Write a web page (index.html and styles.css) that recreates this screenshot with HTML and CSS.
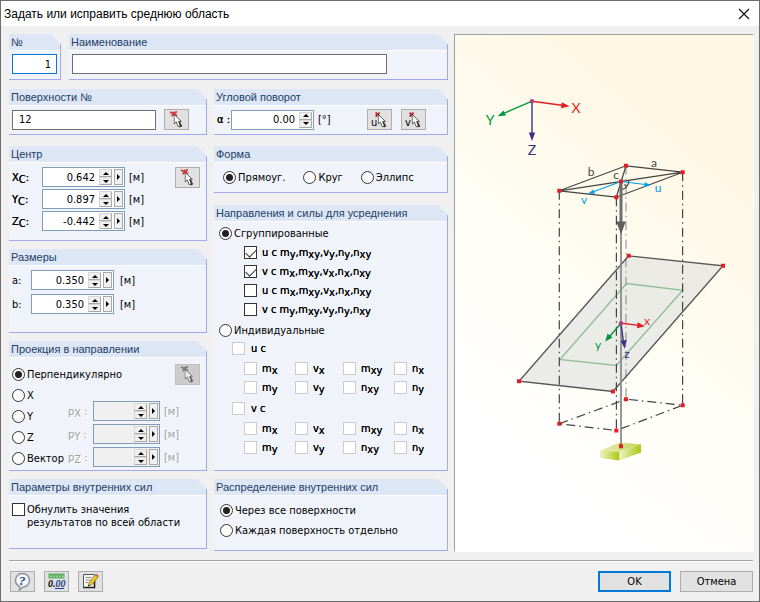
FILE: index.html
```html
<!DOCTYPE html>
<html lang="ru">
<head>
<meta charset="utf-8">
<title>Задать или исправить среднюю область</title>
<link rel="stylesheet" href="styles.css">
</head>
<body>
<svg class="defs" aria-hidden="true">
  <symbol id="pointer" viewBox="0 0 9 14">
    <path d="M.6.8v9.6l2.200-1.900 1.900 4.600 2.200-1-1.900-4.300h2.800z" fill="#fff" stroke="#4a4a4a" stroke-width=".9"/>
    <path d="M5.600 8.200l2.200 4.200-2 1.200" fill="none" stroke="#333" stroke-width="1.500"/>
  </symbol>
  <symbol id="pick" viewBox="0 0 23 19">
    <path class="mark" d="M5 2l7 3.600M11.800 1.300L6.600 6.200M8.600 1.600l1 4.200" stroke="#d03a3a" stroke-width="1.800" fill="none"/>
    <use href="#pointer" x="8.500" y="3.500" width="9" height="14"/>
  </symbol>
  <symbol id="mark-pick" viewBox="0 0 23 19">
    <path d="M7.600 2.600l4 4M11.600 2.600l-4 4" stroke="#b82030" stroke-width="1.800" fill="none"/>
    <use href="#pointer" x="9.600" y="3.600" width="9" height="14"/>
  </symbol>
</svg>
<form class="dialog">
  <header class="titlebar">
    <h1>Задать или исправить среднюю область</h1>
    <button type="button" class="close" aria-label="Закрыть"><svg viewBox="0 0 12 12"><path d="M1 1l10 10M11 1L1 11" stroke="#111" stroke-width="1.2"/></svg></button>
  </header>

  <main class="content">
    <div class="settings">
      <div class="row row-name">
        <section class="panel">
          <h2><label for="num">№</label></h2>
          <div class="body line"><input id="num" class="text focus" value="1"></div>
        </section>
        <section class="panel">
          <h2><label for="name">Наименование</label></h2>
          <div class="body line"><input id="name" class="text name"></div>
        </section>
      </div>

      <div class="row row-cols">
        <section class="panel">
          <h2><label for="surf">Поверхности №</label></h2>
          <div class="body line spread"><input id="surf" class="text surf" value="12"><button type="button" class="tool" aria-label="Выбрать поверхности"><svg viewBox="0 0 23 19"><use href="#pick"/></svg></button></div>
        </section>
        <section class="panel">
          <h2>Угловой поворот</h2>
          <div class="body line angle">
            <label for="alpha">α :</label>
            <div class="spin"><input id="alpha" value="0.00"><span class="steps"><button type="button" class="up" aria-label="Больше"></button><button type="button" class="down" aria-label="Меньше"></button></span></div>
            <span class="unit">[°]</span>
            <div class="tools">
              <button type="button" class="tool" aria-label="Ось u"><svg viewBox="0 0 23 19"><text x="3" y="16">u</text><use href="#mark-pick"/></svg></button>
              <button type="button" class="tool" aria-label="Ось v"><svg viewBox="0 0 23 19"><text x="3" y="16">v</text><use href="#mark-pick"/></svg></button>
            </div>
          </div>
        </section>
      </div>

      <div class="row row-cols groups">
        <div class="col">
          <section class="panel">
            <h2>Центр</h2>
            <div class="body center">
              <div class="fields">
                <label for="xc">X<sub>C</sub>:</label><div class="spin"><input id="xc" value="0.642"><span class="steps"><button type="button" class="up" aria-label="Больше"></button><button type="button" class="down" aria-label="Меньше"></button></span><button type="button" class="more" aria-label="Список"></button></div><span class="unit">[м]</span>
                <label for="yc">Y<sub>C</sub>:</label><div class="spin"><input id="yc" value="0.897"><span class="steps"><button type="button" class="up" aria-label="Больше"></button><button type="button" class="down" aria-label="Меньше"></button></span><button type="button" class="more" aria-label="Список"></button></div><span class="unit">[м]</span>
                <label for="zc">Z<sub>C</sub>:</label><div class="spin"><input id="zc" value="-0.442"><span class="steps"><button type="button" class="up" aria-label="Больше"></button><button type="button" class="down" aria-label="Меньше"></button></span><button type="button" class="more" aria-label="Список"></button></div><span class="unit">[м]</span>
              </div>
              <button type="button" class="tool" aria-label="Выбрать центр"><svg viewBox="0 0 23 19"><use href="#pick"/></svg></button>
            </div>
          </section>

          <section class="panel">
            <h2>Размеры</h2>
            <div class="body sizes">
              <div class="fields">
                <label for="sa">a:</label><div class="spin"><input id="sa" value="0.350"><span class="steps"><button type="button" class="up" aria-label="Больше"></button><button type="button" class="down" aria-label="Меньше"></button></span><button type="button" class="more" aria-label="Список"></button></div><span class="unit">[м]</span>
                <label for="sb">b:</label><div class="spin"><input id="sb" value="0.350"><span class="steps"><button type="button" class="up" aria-label="Больше"></button><button type="button" class="down" aria-label="Меньше"></button></span><button type="button" class="more" aria-label="Список"></button></div><span class="unit">[м]</span>
              </div>
            </div>
          </section>

          <section class="panel">
            <h2>Проекция в направлении</h2>
            <div class="body projection">
              <div class="first">
                <label class="opt"><input type="radio" name="proj" checked>Перпендикулярно</label>
                <button type="button" class="tool" disabled aria-label="Выбрать вектор"><svg viewBox="0 0 23 19"><use href="#pick"/></svg></button>
              </div>
              <div class="axes">
                <label class="opt"><input type="radio" name="proj">X</label>
                <label class="opt"><input type="radio" name="proj">Y</label>
                <label class="opt"><input type="radio" name="proj">Z</label>
                <label class="opt"><input type="radio" name="proj">Вектор</label>
              </div>
              <div class="fields off">
                <label for="px">p<sub>X</sub> :</label><div class="spin"><input id="px" disabled><span class="steps"><button type="button" class="up" disabled aria-label="Больше"></button><button type="button" class="down" disabled aria-label="Меньше"></button></span><button type="button" class="more" disabled aria-label="Список"></button></div><span class="unit">[м]</span>
                <label for="py">p<sub>Y</sub> :</label><div class="spin"><input id="py" disabled><span class="steps"><button type="button" class="up" disabled aria-label="Больше"></button><button type="button" class="down" disabled aria-label="Меньше"></button></span><button type="button" class="more" disabled aria-label="Список"></button></div><span class="unit">[м]</span>
                <label for="pz">p<sub>Z</sub> :</label><div class="spin"><input id="pz" disabled><span class="steps"><button type="button" class="up" disabled aria-label="Больше"></button><button type="button" class="down" disabled aria-label="Меньше"></button></span><button type="button" class="more" disabled aria-label="Список"></button></div><span class="unit">[м]</span>
              </div>
            </div>
          </section>

          <section class="panel">
            <h2>Параметры внутренних сил</h2>
            <div class="body params"><label class="opt top"><input type="checkbox"><span>Обнулить значения<br>результатов по всей области</span></label></div>
          </section>
        </div>

        <div class="col">
          <section class="panel shape">
            <h2>Форма</h2>
            <div class="body shapes">
              <label class="opt"><input type="radio" name="shape" checked>Прямоуг.</label>
              <label class="opt"><input type="radio" name="shape">Круг</label>
              <label class="opt"><input type="radio" name="shape">Эллипс</label>
            </div>
          </section>

          <section class="panel">
            <h2>Направления и силы для усреднения</h2>
            <div class="body forces">
              <label class="opt mode"><input type="radio" name="mode" checked>Сгруппированные</label>
              <div class="grouped">
                <label class="opt sym"><input type="checkbox" checked><span>u c m<sub>y</sub>,m<sub>xy</sub>,v<sub>y</sub>,n<sub>y</sub>,n<sub>xy</sub></span></label>
                <label class="opt sym"><input type="checkbox" checked><span>v c m<sub>x</sub>,m<sub>xy</sub>,v<sub>x</sub>,n<sub>x</sub>,n<sub>xy</sub></span></label>
                <label class="opt sym"><input type="checkbox"><span>u c m<sub>x</sub>,m<sub>xy</sub>,v<sub>x</sub>,n<sub>x</sub>,n<sub>xy</sub></span></label>
                <label class="opt sym"><input type="checkbox"><span>v c m<sub>y</sub>,m<sub>xy</sub>,v<sub>y</sub>,n<sub>y</sub>,n<sub>xy</sub></span></label>
              </div>
              <label class="opt mode"><input type="radio" name="mode">Индивидуальные</label>
              <div class="single">
                <label class="opt sym axis"><input type="checkbox" disabled><span>u c</span></label>
                <div class="parts">
                  <label class="opt sym"><input type="checkbox" disabled><span>m<sub>x</sub></span></label>
                  <label class="opt sym"><input type="checkbox" disabled><span>v<sub>x</sub></span></label>
                  <label class="opt sym"><input type="checkbox" disabled><span>m<sub>xy</sub></span></label>
                  <label class="opt sym"><input type="checkbox" disabled><span>n<sub>x</sub></span></label>
                  <label class="opt sym"><input type="checkbox" disabled><span>m<sub>y</sub></span></label>
                  <label class="opt sym"><input type="checkbox" disabled><span>v<sub>y</sub></span></label>
                  <label class="opt sym"><input type="checkbox" disabled><span>n<sub>xy</sub></span></label>
                  <label class="opt sym"><input type="checkbox" disabled><span>n<sub>y</sub></span></label>
                </div>
                <label class="opt sym axis"><input type="checkbox" disabled><span>v c</span></label>
                <div class="parts">
                  <label class="opt sym"><input type="checkbox" disabled><span>m<sub>x</sub></span></label>
                  <label class="opt sym"><input type="checkbox" disabled><span>v<sub>x</sub></span></label>
                  <label class="opt sym"><input type="checkbox" disabled><span>m<sub>xy</sub></span></label>
                  <label class="opt sym"><input type="checkbox" disabled><span>n<sub>x</sub></span></label>
                  <label class="opt sym"><input type="checkbox" disabled><span>m<sub>y</sub></span></label>
                  <label class="opt sym"><input type="checkbox" disabled><span>v<sub>y</sub></span></label>
                  <label class="opt sym"><input type="checkbox" disabled><span>n<sub>xy</sub></span></label>
                  <label class="opt sym"><input type="checkbox" disabled><span>n<sub>y</sub></span></label>
                </div>
              </div>
            </div>
          </section>

          <section class="panel">
            <h2>Распределение внутренних сил</h2>
            <div class="body spreadout">
              <label class="opt"><input type="radio" name="dist" checked>Через все поверхности</label>
              <label class="opt"><input type="radio" name="dist">Каждая поверхность отдельно</label>
            </div>
          </section>
        </div>
      </div>
    </div>

    <figure class="picture">
      <svg viewBox="455 35 298 515" role="img" aria-label="Схема области усреднения">
        <defs>
          <linearGradient id="g1"><stop offset="0" stop-color="#eef3c4"/><stop offset="1" stop-color="#aac814"/></linearGradient>
          <linearGradient id="g2"><stop offset="0" stop-color="#e6edb4"/><stop offset="1" stop-color="#c3d856"/></linearGradient>
        </defs>
        <path d="M628.7 255.3L723 265.3 613 391l-94-10.3z" fill="#dedfde" fill-opacity=".6"/>
        <path d="M626.5 283l56.2 6.7-66.4 75.3-56.3-6z" fill="none" stroke="#93c09b" stroke-width="1.4"/>
        <g fill="none" stroke="#444" stroke-width="1.2" stroke-dasharray="9 4 1.5 4">
          <path d="M559.3 190.3V423.3M616.4 196.7V430M682.6 171.7V404.7"/>
          <path d="M626 165.3V398.7" stroke="#999"/>
          <path d="M559.3 423.3L626 398.7l56.7 6-66.4 25.3z"/>
        </g>
        <path d="M628.7 255.3L723 265.3 613 391l-94-10.3z" fill="none" stroke="#555" stroke-width="1.3"/>
        <path d="M600 450l20-8 21 1.7-21.7 7.8z" fill="url(#g2)"/>
        <path d="M619.3 451.5l21.700-7.800v8.300l-21.700 8z" fill="url(#g1)"/>
        <path d="M600 450l19.300 1.500v8.500l-19.300-2.500z" fill="url(#g1)"/>
        <path d="M626 165.300l56.700 6.400-66.400 25-57-6.400zM559.300 190.300l123.400-18.600M626 165.300l-9.700 31.400" fill="none" stroke="#444" stroke-width="1.2"/>
        <path d="M629 180.500q-1 7-7 8.500" fill="none" stroke="#333" stroke-width="1.2"/><circle cx="625" cy="184.600" r=".8" fill="#333"/>
        <path d="M621 181V446" stroke="#8c8c8c" stroke-width="1.8"/>
        <path d="M621 181v43" stroke="#6e6e6e" stroke-width="3"/>
        <path d="M616.300 221h9.400l-4.700 13z" fill="#5e5e5e"/>
        <g stroke="#00a0e3" fill="#00a0e3" stroke-width="1.2">
          <path d="M621 181l-27 10M621 181l24 3"/><path d="M588.300 193.300l5-4 1.200 3.600zM650 184.700l-5.500 1.300.5-4z" stroke-width=".5"/>
        </g>
        <g stroke-width="1.4">
          <path d="M532 100.700l30 4" stroke="#e31e24"/><path d="M569.500 105.700l-8.500 2 .8-6z" fill="#e31e24"/>
          <path d="M532 100.700l-29 12.500" stroke="#00963f"/><path d="M497.700 115.700l5.800-5.700 2.500 5z" fill="#00963f"/>
          <path d="M532 100.700v33" stroke="#393185"/><path d="M532 140.500l-3.200-8.500h6.400z" fill="#393185"/>
          <path d="M621 322.700l18 2.200" stroke="#e31e24"/><path d="M645 325.800l-8 2 .7-6z" fill="#e31e24"/>
          <path d="M621 322.700l-12 14" stroke="#00963f"/><path d="M605.300 341l2.200-8 5 4z" fill="#00963f"/>
          <path d="M621 322.700l2.500 20" stroke="#393185"/><path d="M624.700 348.300l-4-8 6-.8z" fill="#393185"/>
        </g>
        <circle cx="532" cy="100.700" r="2.200" fill="#b0407c"/><circle cx="621" cy="322.700" r="2.200" fill="#b0407c"/>
        <path d="M624 163.300h4v4h-4zM680.700 169.700h4v4h-4zM614.300 194.700h4v4h-4zM557.300 188.300h4v4h-4zM619 179h4v4h-4zM626.700 253.300h4v4h-4zM721 263.300h4v4h-4zM611 389h4v4h-4zM517 378.700h4v4h-4zM624 396.700h4v4h-4zM680.700 402.700h4v4h-4zM614.300 428h4v4h-4zM557.300 421.300h4v4h-4zM619 443.700h4v4h-4z" fill="#e31e24"/>
        <g class="big"><text x="576" y="112" fill="#e31e24">X</text><text x="490" y="124" fill="#00963f">Y</text><text x="532" y="154" fill="#393185">Z</text></g>
        <g class="small"><text x="591" y="175" fill="#444">b</text><text x="654" y="166" fill="#444">a</text><text x="616" y="178" fill="#444">c</text><text x="658" y="191" fill="#00a0e3">u</text><text x="584" y="203" fill="#00a0e3">v</text><text x="647" y="324" fill="#e31e24">x</text><text x="598" y="348" fill="#00963f">y</text><text x="627" y="357" fill="#393185">z</text></g>
      </svg>
    </figure>
  </main>

  <footer class="footer">
    <button type="button" class="tool" aria-label="Справка"><svg viewBox="0 0 23 19"><path d="M11.500 1.500c4.200 0 7 2.900 7 6.700s-2.800 6.800-6.500 6.800L8.500 18l.2-3.600C6 13.300 4.500 11 4.500 8.200c0-3.800 2.800-6.700 7-6.700z" fill="#f4f6f8" stroke="#8b949e" stroke-width="1.500"/><text class="q" x="8" y="13">?</text></svg></button>
    <button type="button" class="tool" aria-label="Единицы"><svg viewBox="0 0 23 19"><path d="M3.500 1.500h16v5h-16z" fill="#58b05c"/><path d="M6 3.500v2M9 3.500v2M12 3.500v2M15 3.500v2M18 3.500v2" stroke="#cbe8cc"/><text class="num" x="3" y="15">0.<tspan fill="#1f3f8a">00</tspan></text><path d="M10 16.500h9" stroke="#1f3f8a"/></svg></button>
    <button type="button" class="tool" aria-label="Комментарий"><svg viewBox="0 0 23 19"><path d="M4.500 2.500h11v13h-11z" fill="#fafafa" stroke="#555"/><path d="M15.500 6v9.500h-11" fill="none" stroke="#222" stroke-width="1.600"/><path d="M6.500 5.500h6M6.500 8h5M6.500 10.500h3" stroke="#888"/><path d="M9.300 14.200l1.200-4 5.800-7.400 2.700 2.100-5.900 7.500z" fill="#f3c820" stroke="#6d5a10" stroke-width=".7"/><path d="M16.300 2.800l.9-1.200 2.700 2.100-.9 1.200z" fill="#d06a50"/><path d="M9.300 14.200l.5-1.700 1.200 1z" fill="#111"/></svg></button>
    <button type="submit" class="btn ok">OK</button>
    <button type="button" class="btn">Отмена</button>
  </footer>
</form>
</body>
</html>
```
FILE: styles.css
```css
* { box-sizing: border-box; }

html, body { margin: 0; height: 100%; }

body {
  background: #f0f0f0;
  color: #000;
  font: 11px/13px "DejaVu Sans Condensed", "DejaVu Sans", sans-serif;
}

h1, h2, figure { margin: 0; }
button, input { font: inherit; color: inherit; margin: 0; padding: 0; border-radius: 0; }
button { border: 0; }
.defs { display: none; }

.dialog {
  display: flex;
  flex-direction: column;
  min-height: 100%;
  border: 1px solid #6e6e6e;
}

/* Title bar */
.titlebar {
  display: flex;
  align-items: center;
  justify-content: space-between;
  height: 25px;
  padding: 0 9px 0 3px;
  background: #fff;
}
.titlebar h1 { font: 12px/16px "Liberation Sans", Arial, sans-serif; }
.close { width: 12px; height: 12px; background: none; }
.close svg { display: block; width: 12px; height: 12px; }

/* Main area */
.content {
  display: grid;
  grid-template-columns: 439fr 300fr;
  gap: 6px;
  flex: 1;
  padding: 8px 5px 8px 8px;
}
.settings { display: flex; flex-direction: column; }
.row { display: grid; gap: 8px; margin-bottom: 9px; }
.row-name { grid-template-columns: 52fr 379fr; }
.row-cols { grid-template-columns: 198fr 234fr; }
.row-cols { margin-bottom: 11px; gap: 7px; }
.groups { margin-bottom: 0; align-items: start; }
.col { display: flex; flex-direction: column; gap: 8px; }
.shape { margin-bottom: 4px; }

/* Panels: header with a cut corner */
.panel {
  position: relative;
  background: #f0f4fa;
  border-bottom: 1px solid #a6a6ee;
  clip-path: polygon(0 0, calc(100% - 10px) 0, 100% 10px, 100% 100%, 0 100%);
}
.panel::after {
  content: "";
  position: absolute;
  top: 10px;
  right: 0;
  bottom: 0;
  border-right: 1px solid #a6a6ee;
}
.panel h2 {
  height: 17px;
  padding: 1px 0 0 2px;
  border-bottom: 1px solid #fff;
  background: #dce6f4;
  color: #1f4068;
  font: 11px/15px "Liberation Sans", Arial, sans-serif;
  white-space: nowrap;
}
.line { display: flex; align-items: center; padding: 3px 3px 5px; }
.row-cols .line { padding-bottom: 4px; }
.spread { justify-content: space-between; padding-right: 18px; }

.text {
  width: 100%;
  height: 20px;
  padding: 0 6px;
  border: 1px solid #6e6e6e;
  background: #fff;
}
.focus { border-color: #0078d7; text-align: right; padding-right: 5px; }
.row-name .panel:first-child .body { padding-right: 4px; }
.name { width: 315px; }
.surf { width: 144px; }

/* Square tool buttons */
.tool {
  flex: none;
  width: 25px;
  height: 21px;
  border: 1px solid #adadad;
  background: #e1e1e1;
}
.tool svg { display: block; width: 23px; height: 19px; }
.tool text { font-size: 11px; }
.tool:disabled { background: #ccc; border-color: #bfbfbf; }
.tool:disabled svg { filter: grayscale(1); opacity: .7; }
.tool .q { font: italic bold 13px "Liberation Serif", serif; fill: #24468c; }
.tool .num { font: italic bold 10px "Liberation Serif", serif; }
.tools { display: flex; gap: 9px; margin-left: auto; }

/* Number fields */
.spin {
  display: flex;
  gap: 2px;
  width: 83px;
  height: 20px;
  padding: 1px;
  border: 1px solid #7f9db9;
  background: #fff;
}
.spin input {
  flex: 1;
  min-width: 0;
  border: 0;
  padding-right: 2px;
  background: none;
  text-align: right;
}
.steps { display: flex; flex-direction: column; width: 13px; }
.steps button, .more {
  flex: 1;
  display: grid;
  place-items: center;
  border: 1px solid #a8a8a8;
  border-left-color: #d8d8d8;
  border-top-color: #d8d8d8;
  background: #f0f0f0;
}
.more { flex: none; width: 9px; border-color: #a8a8a8; }
.up::after, .down::after, .more::after { content: ""; border: 3px solid transparent; }
.up::after { border-top: 0; border-bottom-color: #000; }
.down::after { border-bottom: 0; border-top-color: #000; }
.more::after { border-right: 0; border-left-color: #000; }

.angle label { width: 14px; white-space: nowrap; }
.angle .unit { margin-left: 4px; }
.angle { padding-right: 22px; }

.fields { display: grid; align-items: center; row-gap: 2px; white-space: nowrap; }
.center { display: flex; justify-content: space-between; align-items: start; padding: 4px 7px 9px 3px; }
.center .fields { grid-template-columns: 30px 83px auto; }
.center .unit { margin-left: 4px; }
.sizes { padding: 4px 3px 18px; }
.sizes .fields { grid-template-columns: 19px 83px auto; row-gap: 4px; }
.sizes .unit { margin-left: 6px; }

sub { font-size: inherit; line-height: 0; vertical-align: -2px; }

/* Symbol labels are drawn a little heavier than running text */
.sym span, .center label, .angle label { text-shadow: 0 0 #000; }

.projection { display: grid; grid-template-columns: 56px 1fr; padding: 6px 7px 2px 3px; }
.first { grid-column: 1 / 3; display: flex; justify-content: space-between; align-items: center; height: 21px; }
.axes { display: grid; gap: 1px; white-space: nowrap; }
.off { grid-template-columns: 25px 67px auto; row-gap: 3px; align-self: end; padding-bottom: 1px; color: #a0a0a0; text-shadow: 1px 1px #fff; }
.off .spin { width: 67px; background: #f0f0f0; }
.off .unit { margin-left: 4px; }

/* Radio buttons and tick boxes */
.opt { display: flex; align-items: center; gap: 2px; height: 20px; white-space: nowrap; }
.opt input {
  appearance: none;
  flex: none;
  display: grid;
  place-items: center;
  width: 13px;
  height: 13px;
  border: 1px solid #333;
  background: #fff;
}
.opt input[type="radio"] { border-radius: 50%; }
.opt input[type="radio"]:checked::after { content: ""; width: 7px; height: 7px; border-radius: 50%; background: #222; }
.opt input[type="checkbox"]:checked::after {
  content: "";
  width: 9px;
  height: 5px;
  border: solid #333;
  border-width: 0 0 1px 1px;
  transform: translateY(-1px) rotate(-45deg);
}
.opt input:disabled { border-color: #ccc; }
.params { padding: 7px 3px 19px; }
.top { align-items: start; height: auto; }

.shapes { display: flex; gap: 18px; padding: 4px 9px 5px; }
.forces { padding: 4px 5px 13px; }
.mode { height: 15px; }
.grouped { padding: 2px 0 4px 25px; }
.sym { gap: 5px; height: 19px; }
.single { padding: 1px 0 0 13px; }
.parts { display: grid; grid-template-columns: 51px 48px 51px 1fr; padding: 1px 0 2px 12px; }
.parts:last-child { padding-bottom: 0; }
.axis { gap: 6px; }
.spreadout { padding: 4px 6px 10px; }

/* Illustration */
.picture {
  border: 1px solid #fff;
  border-top-color: #a0a0a0;
  border-left-color: #a0a0a0;
  background: linear-gradient(40deg, #fff 20%, #fffdf4 50%, #fdf6e0 85%);
}
.picture svg { display: block; width: 100%; height: 100%; }
.picture text { font-family: Lato, sans-serif; text-anchor: middle; }
.big { font-size: 14px; }
.small { font-size: 12px; }

/* Footer */
.footer {
  display: flex;
  align-items: center;
  gap: 9px;
  margin: 0 6px 0 8px;
  padding: 10px 0 9px 1px;
  border-top: 1px solid #a0a0a0;
  box-shadow: inset 0 1px #fff;
}
.btn { width: 73px; height: 21px; border: 1px solid #adadad; background: #e1e1e1; }
.ok { margin-left: auto; border: 2px solid #0078d7; }
```
